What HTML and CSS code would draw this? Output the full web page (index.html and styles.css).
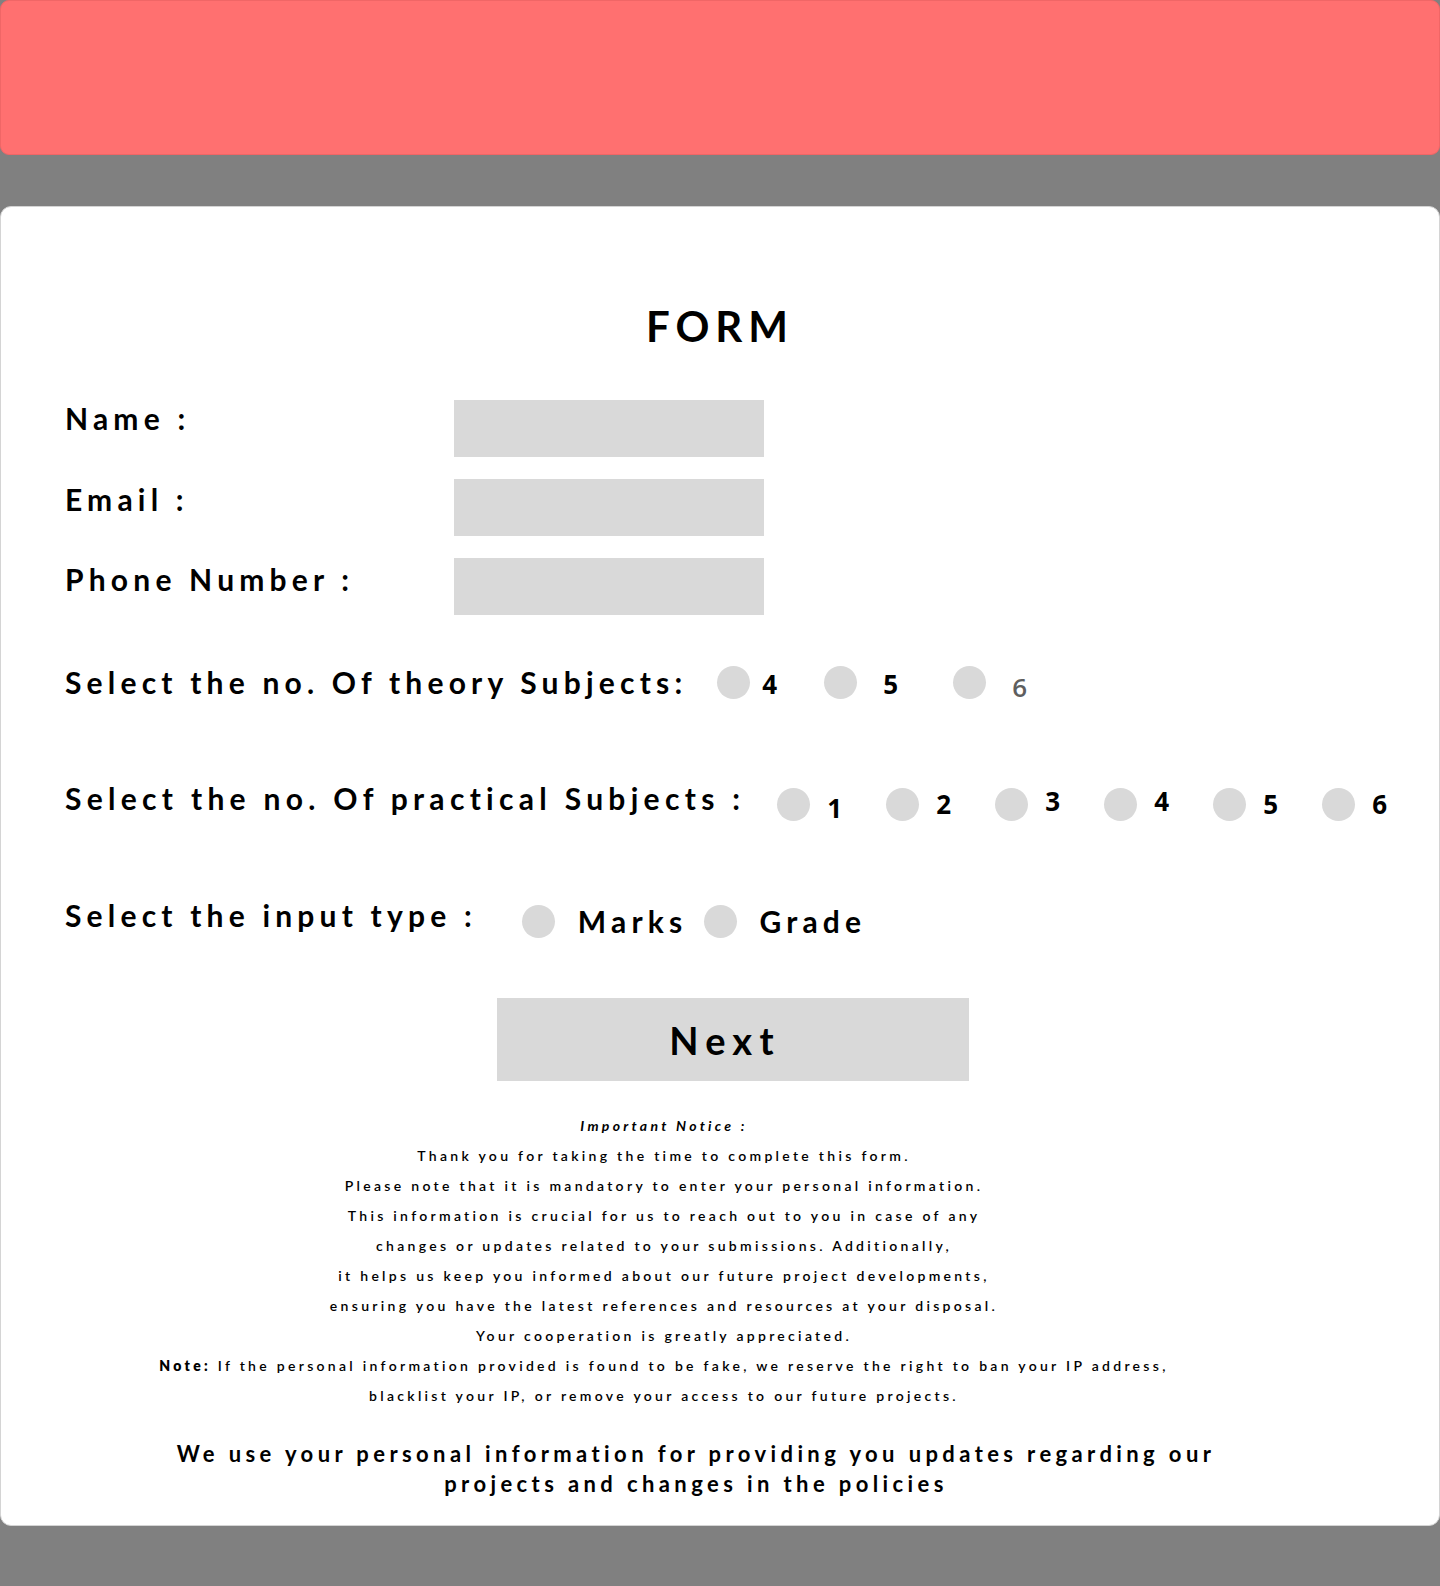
FILE: index.html
```html
<!DOCTYPE html>
<html lang="en">
<head>
<meta charset="utf-8">
<title>Form</title>
<link rel="stylesheet" href="styles.css">
</head>
<body>
<header class="topbar"></header>
<main class="card">
  <h1 class="title">FORM</h1>

  <div class="fields">
    <label class="label">Name :</label>
    <div class="input"></div>
    <label class="label label-email">Email :</label>
    <div class="input"></div>
    <label class="label label-phone">Phone Number :</label>
    <div class="input"></div>
  </div>

  <div class="choice-row row-theory">
    <span class="label">Select the no. Of theory Subjects:</span>
    <div class="opts">
      <div class="opt opt-t1"><span class="radio"></span><span class="digit">4</span></div>
      <div class="opt opt-t2"><span class="radio"></span><span class="digit">5</span></div>
      <div class="opt opt-t3"><span class="radio"></span><span class="digit digit-grey">6</span></div>
    </div>
  </div>

  <div class="choice-row row-practical">
    <span class="label">Select the no. Of practical Subjects :</span>
    <div class="opts">
      <div class="opt opt-p"><span class="radio"></span><span class="digit d-low">1</span></div>
      <div class="opt opt-p"><span class="radio"></span><span class="digit d-mid">2</span></div>
      <div class="opt opt-p"><span class="radio"></span><span class="digit d-hi">3</span></div>
      <div class="opt opt-p"><span class="radio"></span><span class="digit d-hi">4</span></div>
      <div class="opt opt-p"><span class="radio"></span><span class="digit d-mid">5</span></div>
      <div class="opt opt-p"><span class="radio"></span><span class="digit d-mid">6</span></div>
    </div>
  </div>

  <div class="choice-row row-type">
    <span class="label">Select the input type :</span>
    <div class="opts">
      <div class="opt opt-marks"><span class="radio"></span><span class="word">Marks</span></div>
      <div class="opt opt-grade"><span class="radio"></span><span class="word">Grade</span></div>
    </div>
  </div>

  <div class="btn-wrap">
    <button class="next-btn" type="button">Next</button>
  </div>

  <section class="notice">
    <p class="notice-head">Important Notice :</p>
    <p>Thank you for taking the time to complete this form.</p>
    <p>Please note that it is mandatory to enter your personal information.</p>
    <p>This information is crucial for us to reach out to you in case of any</p>
    <p>changes or updates related to your submissions. Additionally,</p>
    <p>it helps us keep you informed about our future project developments,</p>
    <p>ensuring you have the latest references and resources at your disposal.</p>
    <p>Your cooperation is greatly appreciated.</p>
    <p><strong>Note:</strong> If the personal information provided is found to be fake, we reserve the right to ban your IP address,</p>
    <p>blacklist your IP, or remove your access to our future projects.</p>
  </section>

  <p class="footer-note">We use your personal information for providing you updates regarding our<br>projects and changes in the policies</p>
</main>
</body>
</html>
```

FILE: styles.css
```css
* { box-sizing: border-box; }

html, body {
  margin: 0;
  padding: 0;
}

body {
  background: #808080;
  font-family: Lato, "Open Sans", "DejaVu Sans", sans-serif;
  color: #000;
  padding-bottom: 61px;
}

.topbar {
  display: block;
  height: 155px;
  background: #ff7070;
  border-radius: 9px;
  border: 1px solid #f06666;
}

.card {
  display: block;
  margin-top: 51px;
  background: #fff;
  border: 1px solid #d4d4d4;
  border-radius: 11px;
  padding: 94px 0 26px 64px;
}

.title {
  margin: 0 0 0 -64px;
  font-size: 42px;
  line-height: 50px;
  font-weight: 700;
  letter-spacing: 6px;
  text-align: center;
}

.label {
  font-size: 30px;
  line-height: 36px;
  font-weight: 700;
  letter-spacing: 5.2px;
  white-space: nowrap;
}

.label-email { padding-top: 2px; }
.label-phone { padding-top: 3px; }

.fields {
  margin-top: 49px;
  display: grid;
  grid-template-columns: 389px 310px;
  grid-auto-rows: 57px;
  row-gap: 22px;
  align-items: start;
}

.input {
  height: 57px;
  background: #d9d9d9;
}

.choice-row {
  display: flex;
  align-items: flex-start;
}

.row-theory { margin-top: 49px; gap: 30px; }
.row-practical { margin-top: 76px; gap: 32px; }
.row-type { margin-top: 72px; gap: 45px; }

.opts {
  display: flex;
  align-items: flex-start;
}

.row-theory .opts { padding-top: 2px; }
.row-practical .opts { padding-top: 8px; }
.row-type .opts { padding-top: 8px; }

.row-practical .label { letter-spacing: 5.3px; }

.opt {
  display: flex;
  align-items: flex-start;
}

.radio {
  flex: none;
  width: 33px;
  height: 33px;
  border-radius: 50%;
  background: #d9d9d9;
}

.digit {
  font-family: "Open Sans", Lato, sans-serif;
  font-weight: 700;
  font-size: 26px;
  line-height: 33px;
  padding-top: 2px;
}

.digit-grey {
  color: #5e5e5e;
  font-weight: 600;
  font-size: 26px;
  padding-top: 5px;
}

.opt-t1 { width: 107px; gap: 12px; }
.opt-t2 { width: 129px; gap: 26px; }
.opt-t3 { gap: 26px; }

.opt-p { width: 109px; gap: 17px; }

.d-low { padding-top: 4px; }
.d-mid { padding-top: 0; }
.d-hi { padding-top: 0; margin-top: -3px; }

.word {
  font-size: 30px;
  line-height: 33px;
  font-weight: 700;
  letter-spacing: 5.2px;
}

.opt-marks { gap: 23px; margin-right: 17px; }
.opt-grade { gap: 22px; }

.btn-wrap {
  margin-top: 60px;
  display: flex;
  justify-content: center;
  margin-left: -64px;
  padding-left: 26px;
}

.next-btn {
  width: 472px;
  height: 83px;
  border: none;
  border-radius: 0;
  background: #d9d9d9;
  font-family: Lato, "Open Sans", sans-serif;
  font-size: 38px;
  font-weight: 700;
  letter-spacing: 7.2px;
  color: #000;
  padding: 0 16px 0 0;
}

.notice {
  margin: 30px 0 0 -64px;
  padding-right: 112px;
  text-align: center;
}

.notice p {
  margin: 0;
  font-size: 14px;
  line-height: 30px;
  letter-spacing: 3.3px;
  font-weight: 600;
}

.notice .notice-head {
  font-style: italic;
  font-weight: 700;
}

.notice strong { font-weight: 800; }

.footer-note {
  margin: 28px 0 0 -64px;
  padding-right: 48px;
  text-align: center;
  font-size: 22px;
  line-height: 30px;
  font-weight: 700;
  letter-spacing: 4.4px;
}
```
